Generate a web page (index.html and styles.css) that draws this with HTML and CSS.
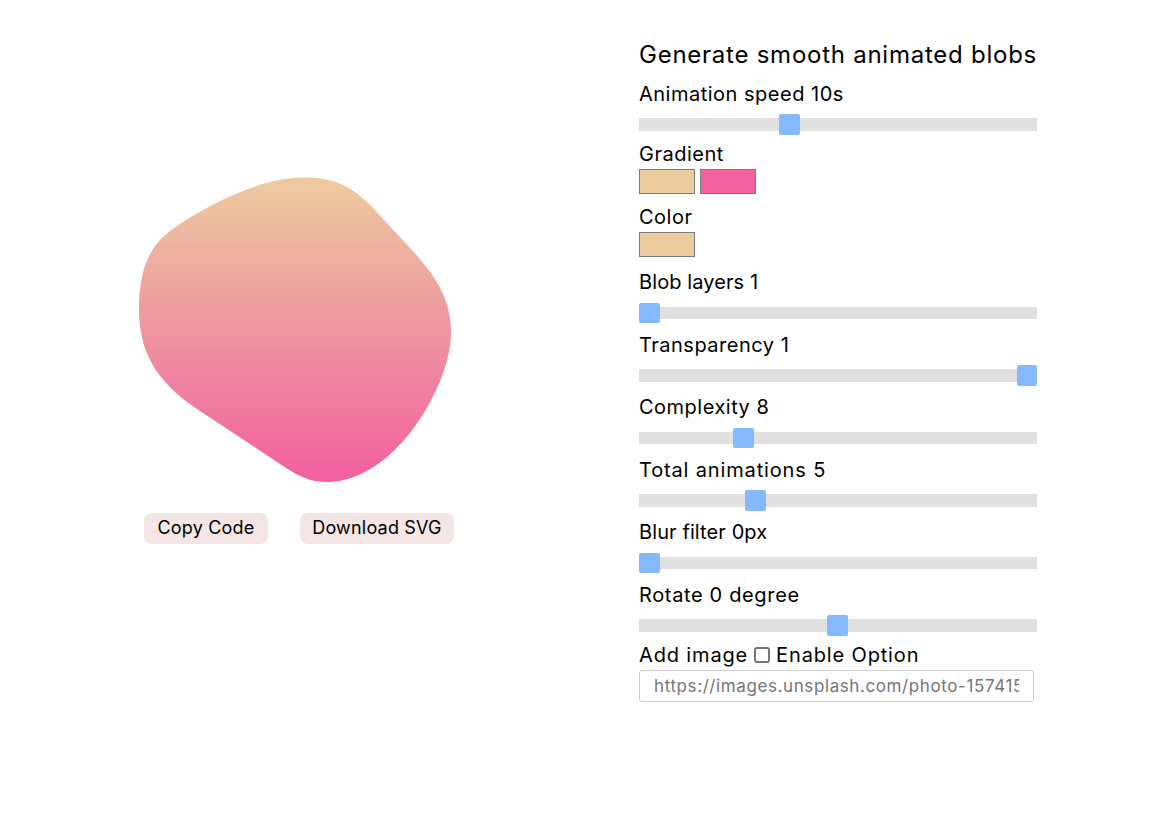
FILE: index.html
```
<!DOCTYPE html>
<html lang="en">
<head>
<meta charset="utf-8">
<title>Blob generator</title>
<link rel="stylesheet" href="styles.css">
</head>
<body>
<main class="page">
  <section class="preview">
    <svg class="blob" viewBox="100 160 400 340" xmlns="http://www.w3.org/2000/svg">
      <defs>
        <linearGradient id="blobFill" x1="0" y1="0" x2="0" y2="1">
          <stop offset="0" stop-color="#eccb9f"/>
          <stop offset="1" stop-color="#f25fa0"/>
        </linearGradient>
      </defs>
      <path fill="url(#blobFill)" d="M303 177.5C332 177.5 350 184 372 207L410 248C437 277 451 300 451 333C451 385 395 482 327 482C310 482 298 476 280 464L200 411C165 388 139 360 139 310C139 276 146 249 170 231C194 213 255 177.5 303 177.5Z"/>
    </svg>
    <div class="actions">
      <button class="action action-copy" type="button">Copy Code</button>
      <button class="action action-download" type="button">Download SVG</button>
    </div>
  </section>
  <section class="controls">
    <h1 class="title">Generate smooth animated blobs</h1>
    <div class="slider-row slider-row-short">
      <label class="label">Animation speed 10s</label>
      <input class="range" type="range" min="1" max="25.2" step="0.1" value="10">
    </div>
    <div class="color-row">
      <label class="label">Gradient</label>
      <div class="swatches">
        <input class="swatch" type="color" value="#eccb9f">
        <input class="swatch" type="color" value="#f4619f">
      </div>
    </div>
    <div class="color-row color-row-last">
      <label class="label">Color</label>
      <div class="swatches">
        <input class="swatch" type="color" value="#eccb9f">
      </div>
    </div>
    <div class="slider-row">
      <label class="label label-tight">Blob layers 1</label>
      <input class="range" type="range" min="1" max="10" value="1">
    </div>
    <div class="slider-row">
      <label class="label">Transparency 1</label>
      <input class="range" type="range" min="0" max="1" step="0.1" value="1">
    </div>
    <div class="slider-row">
      <label class="label">Complexity 8</label>
      <input class="range" type="range" min="4" max="20" value="8">
    </div>
    <div class="slider-row">
      <label class="label label-wide">Total animations 5</label>
      <input class="range" type="range" min="1" max="15.2" step="0.1" value="5">
    </div>
    <div class="slider-row">
      <label class="label label-tight">Blur filter 0px</label>
      <input class="range" type="range" min="0" max="20" value="0">
    </div>
    <div class="slider-row slider-row-last">
      <label class="label label-rotate">Rotate 0 degree</label>
      <input class="range" type="range" min="-180" max="181" value="0">
    </div>
    <div class="image-row">
      <label class="label check-label">Add image <input class="check" type="checkbox"> Enable Option</label>
      <input class="url" type="text" placeholder="https://images.unsplash.com/photo-1574158622682">
    </div>
  </section>
</main>
</body>
</html>
```
FILE: styles.css
```
* { box-sizing: border-box; }
html, body { margin: 0; padding: 0; background: #fff; }
body { font-family: Inter, "Liberation Sans", sans-serif; color: #000; }
.page {
  display: grid;
  grid-template-columns: 639px 398px;
  width: 1156px;
  height: 823px;
}
.preview { padding-top: 160px; display: flex; flex-direction: column; align-items: flex-start; }
.blob { display: block; width: 400px; height: 340px; margin-left: 100px; }
.actions { display: flex; gap: 32px; margin: 13px 0 0 144px; }
.action {
  height: 31px;
  padding: 0 0 2px;
  border: 0;
  border-radius: 8px;
  background: #f3e6e4;
  color: #000;
  font: 400 18px/29px Inter, "Liberation Sans", sans-serif;
  letter-spacing: 0.2px;
  white-space: nowrap;
}
.action-copy { width: 124px; }
.action-download { width: 154px; }
.controls { padding-top: 40px; }
.title { margin: 0 0 10px; font-size: 24px; font-weight: 400; line-height: 30px; letter-spacing: 0.75px; white-space: nowrap; }
.label { display: block; font-size: 20px; line-height: 28px; letter-spacing: 0.5px; white-space: nowrap; }
.label-tight { letter-spacing: 0.1px; }
.label-wide { letter-spacing: 0.85px; }
.label-rotate { letter-spacing: 0.65px; }
.slider-row { display: flow-root; height: 62.5px; }
.slider-row .label { margin-top: -0.5px; }
.slider-row-short { height: 59.5px; }
.slider-row-last { height: 60px; }
.color-row { height: 63px; }
.color-row-last { height: 66px; }
.range {
  -webkit-appearance: none;
  appearance: none;
  display: block;
  width: 398px;
  height: 12.5px;
  margin: 10.5px 0 0;
  background: #e0e0e0;
  outline: none;
}
.range::-webkit-slider-thumb {
  -webkit-appearance: none;
  appearance: none;
  width: 20.5px;
  height: 20.5px;
  border-radius: 2px;
  background: #85b8fd;
  border: 0;
}
.swatches { display: flex; gap: 5px; margin-top: 1px; }
.swatch {
  -webkit-appearance: none;
  appearance: none;
  width: 56px;
  height: 25px;
  padding: 0;
  border: 1px solid #7a7a7a;
  background: none;
}
.swatch::-webkit-color-swatch-wrapper { padding: 0; }
.swatch::-webkit-color-swatch { border: 0; }
.check-label { display: flex; align-items: center; gap: 6px; letter-spacing: 0.85px; }
.check {
  -webkit-appearance: none;
  appearance: none;
  width: 16px;
  height: 16px;
  margin: 0;
  border: 2px solid #767676;
  border-radius: 3px;
  background: #fff;
}
.url {
  display: block;
  width: 395px;
  height: 32px;
  margin-top: 1px;
  padding: 0 14px;
  border: 1px solid #ccc;
  border-radius: 3px;
  font: 400 17px Inter, "Liberation Sans", sans-serif;
  letter-spacing: 0.6px;
  color: #757575;
  outline: none;
}
.url::placeholder { color: #757575; opacity: 1; }
```
